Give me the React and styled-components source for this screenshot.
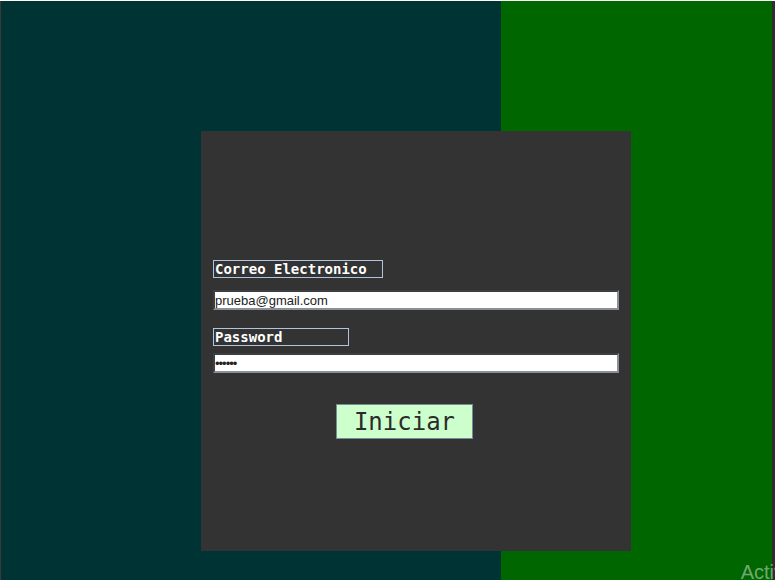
import React, { useState } from "react";
import styled, { createGlobalStyle } from "styled-components";

const GlobalStyle = createGlobalStyle`
  html, body {
    margin: 0;
    padding: 0;
    background: #333333;
  }
  body {
    font-family: "Liberation Sans", Arial, sans-serif;
  }
`;

function App() {
  const [email, setEmail] = useState("prueba@gmail.com");
  const [password, setPassword] = useState("123456");

  return (
    <>
      <GlobalStyle />
      <Screen>
        <Page>
          <Card>
            <Form onSubmit={(e) => e.preventDefault()}>
              <Label width={170}>Correo Electronico</Label>
              <Field
                type="text"
                value={email}
                onChange={(e) => setEmail(e.target.value)}
              />
              <Label width={136} spaced>
                Password
              </Label>
              <Field
                type="password"
                value={password}
                onChange={(e) => setPassword(e.target.value)}
              />
              <Button type="submit">Iniciar</Button>
            </Form>
          </Card>
          <Watermark>Activ</Watermark>
        </Page>
        <Edge />
      </Screen>
    </>
  );
}

const Screen = styled.div`
  display: flex;
  width: 775px;
  height: 580px;
  overflow: hidden;
  border-top: 1px solid #ffffff;
  box-sizing: border-box;
`;

const Page = styled.div`
  position: relative;
  flex: 1;
  padding: 130px 0 0 200px;
  border-left: 1px solid #3a3a3a;
  background: linear-gradient(
    to right,
    #003333 0,
    #003333 500px,
    #006600 500px,
    #006600 100%
  );
`;

const Edge = styled.div`
  width: 3px;
  background: #2e2e2e;
`;

const Card = styled.div`
  width: 430px;
  height: 420px;
  background-color: #333333;
  box-sizing: border-box;
  padding: 129px 12px 0 12px;
`;

const Form = styled.form`
  display: flex;
  flex-direction: column;
  align-items: flex-start;
`;

const Label = styled.label`
  box-sizing: border-box;
  width: ${(p) => p.width}px;
  height: 18px;
  margin-top: ${(p) => (p.spaced ? "18px" : "0")};
  padding: 0 1px;
  border: 1px solid #b0c4de;
  color: #ffffff;
  font-family: "DejaVu Sans Mono", monospace;
  font-weight: bold;
  font-size: 14px;
  line-height: 16px;
  white-space: nowrap;
  overflow: hidden;
`;

const Field = styled.input`
  box-sizing: border-box;
  width: 406px;
  height: 20px;
  margin: 12px 0 0 0;
  padding: 0;
  border: 2px inset #8b9096;
  background: #ffffff;
  color: #222222;
  font-family: "Liberation Sans", Arial, sans-serif;
  font-size: 13px;
  outline: none;

  &[type="password"] {
    margin-top: 7px;
    font-size: 13px;
    letter-spacing: -1px;
  }
`;

const Button = styled.button`
  box-sizing: border-box;
  width: 137px;
  height: 35px;
  margin: 31px 0 0 123px;
  padding: 0;
  border: 1px solid #7a8a99;
  background-color: #ccffcc;
  color: #2b2b2b;
  font-family: "DejaVu Sans Mono", monospace;
  font-size: 24px;
  line-height: 32px;
  cursor: pointer;
`;

const Watermark = styled.div`
  position: absolute;
  right: -12px;
  bottom: -4px;
  color: rgba(255, 255, 255, 0.45);
  font-family: "Liberation Sans", Arial, sans-serif;
  font-size: 20px;
`;

export default App;
